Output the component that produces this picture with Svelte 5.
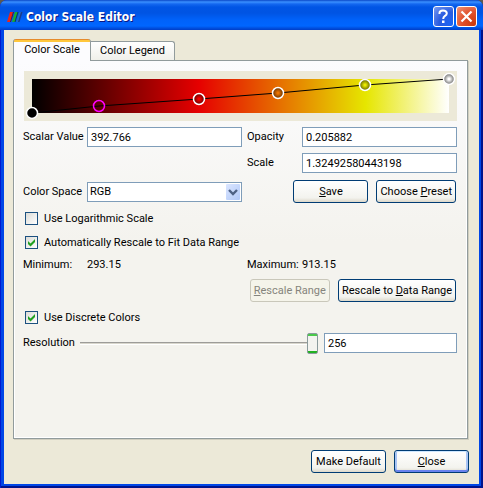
<script>
  let scalarValue = $state('392.766');
  let opacity = $state('0.205882');
  let scale = $state('1.32492580443198');
  let colorSpace = $state('RGB');
  let logScale = $state(false);
  let autoRescale = $state(true);
  let discrete = $state(true);
  let resolution = $state(256);

  const nodes = [
    { x: 8, y: 42, fill: '#000', stroke: '#fff' },
    { x: 75, y: 35, fill: 'none', stroke: '#f0f' },
    { x: 175, y: 28, fill: 'url(#ball-red)', stroke: '#fff' },
    { x: 254, y: 22, fill: 'url(#ball-orange)', stroke: '#fff' },
    { x: 341, y: 14, fill: 'url(#ball-yellow)', stroke: '#fff' },
    { x: 425, y: 8, fill: 'url(#ball-white)', stroke: '#fff' }
  ];
  const balls = [
    ['red', '#f00000', '#700000'],
    ['orange', '#ec7400', '#703600'],
    ['yellow', '#eaea00', '#6c6c00'],
    ['white', '#ffffff', '#787878']
  ];
  const line = nodes.map((n) => `${n.x},${n.y}`).join(' ');
</script>

<div class="window">
  <header>
    <svg class="logo" width="16" height="16" viewBox="0 0 16 16" aria-hidden="true">
      <path d="M3 3h3L3 13H0z" fill="#f02414" />
      <path d="M6 3h1L4 13H3z" fill="#5c1430" />
      <path d="M8 3h2.500L7.500 13H5z" fill="#18b030" />
      <path d="M10.500 3h1L8.500 13h-1z" fill="#0c4040" />
      <path d="M12.500 3H14l-3 10H9.500z" fill="#2c70c0" />
      <path d="M14 3h1.500l-3 10H11z" fill="#1c3c88" />
    </svg>
    <h1>Color Scale Editor</h1>
    <button class="caption help" aria-label="Help">
      <svg width="21" height="21" viewBox="0 0 21 21" aria-hidden="true">
        <path d="M6.500 8V7q0-2.500 3.500-2.500T13.800 7.200q0 1.500-1.800 2.700T10.200 13" fill="none" stroke="#fff" stroke-width="2" />
        <path d="M9 14.500h2.500V17H9z" fill="#fff" />
      </svg>
    </button>
    <button class="caption close" aria-label="Close window">
      <svg width="21" height="21" viewBox="0 0 21 21" aria-hidden="true">
        <path d="M5.500 5.500l10 10M15.500 5.500l-10 10" stroke="#fff" stroke-width="2.200" />
      </svg>
    </button>
  </header>

  <main>
    <div class="tabs" role="tablist">
      <button class="tab active" role="tab" aria-selected="true">Color Scale</button>
      <button class="tab" role="tab" aria-selected="false">Color Legend</button>
    </div>

    <section class="panel" role="tabpanel">
      <div class="plot">
        <svg viewBox="0 0 433 50" aria-label="Color transfer function">
          <defs>
            <linearGradient id="ramp">
              <stop offset="0" stop-color="#000" />
              <stop offset="0.4" stop-color="#e60000" />
              <stop offset="0.8" stop-color="#e6e600" />
              <stop offset="1" stop-color="#fff" />
            </linearGradient>
            {#each balls as [name, light, dark]}
              <radialGradient id="ball-{name}">
                <stop offset="0.15" stop-color={light} />
                <stop offset="0.9" stop-color={dark} />
              </radialGradient>
            {/each}
          </defs>
          <rect x="8" y="8" width="417" height="34" fill="url(#ramp)" />
          <polyline points={line} fill="none" stroke="#000" />
          {#each nodes as n}
            <circle cx={n.x} cy={n.y} r="5.500" fill={n.fill} stroke={n.stroke} stroke-width="1.500" />
          {/each}
        </svg>
      </div>

      <div class="fields">
        <label for="scalar">Scalar Value</label>
        <input id="scalar" type="text" bind:value={scalarValue} />
        <label for="opacity">Opacity</label>
        <input id="opacity" type="text" bind:value={opacity} />
        <label class="third" for="scale">Scale</label>
        <input id="scale" type="text" bind:value={scale} />
      </div>

      <div class="fields space">
        <label for="space">Color Space</label>
        <div class="combo">
          <select id="space" bind:value={colorSpace}>
            <option>RGB</option>
            <option>HSV</option>
            <option>CIELAB</option>
            <option>Diverging</option>
          </select>
          <span class="arrow">
            <svg width="14" height="16" viewBox="0 0 14 16" aria-hidden="true">
              <path d="M3 6l4 4 4-4" fill="none" stroke="#4d6185" stroke-width="2.400" />
            </svg>
          </span>
        </div>
        <div class="actions wide">
          <button class="push"><u>S</u>ave</button>
          <button class="push">Choose <u>P</u>reset</button>
        </div>
      </div>

      <label class="check"><input type="checkbox" bind:checked={logScale} />Use Logarithmic Scale</label>
      <label class="check auto"><input type="checkbox" bind:checked={autoRescale} />Automatically Rescale to Fit Data Range</label>

      <div class="fields range">
        <span>Minimum:</span><span>293.15</span>
        <span>Maximum:</span><span>913.15</span>
      </div>
      <div class="actions">
        <button class="push" disabled><u>R</u>escale Range</button>
        <button class="push">Rescale to <u>D</u>ata Range</button>
      </div>

      <label class="check"><input type="checkbox" bind:checked={discrete} />Use Discrete Colors</label>

      <div class="resolution">
        <label for="res">Resolution</label>
        <input id="res" type="range" min="2" max="256" bind:value={resolution} />
        <input type="text" aria-label="Resolution value" bind:value={resolution} />
      </div>
    </section>

    <footer class="actions">
      <button class="push">Make Default</button>
      <button class="push default"><u>C</u>lose</button>
    </footer>
  </main>
</div>

<style>
  :global(body) {
    background: #5c5a50;
  }
  .window,
  .window * {
    box-sizing: border-box;
  }
  .window {
    display: flex;
    flex-direction: column;
    min-height: 100vh;
    padding: 0 4px 4px;
    border-radius: 7px 7px 0 0;
    background: #0046e6;
    box-shadow: inset 1px 0 #0019cf, inset -2px -2px #00138c;
    font: 11px/14px Roboto, 'Liberation Sans', sans-serif;
    color: #000;
  }
  button,
  input,
  select {
    font: inherit;
    color: inherit;
    margin: 0;
    padding: 0;
  }
  header {
    display: flex;
    align-items: center;
    gap: 2px;
    height: 30px;
    margin: 0 -4px;
    padding: 3px 6px 0 7px;
    border-radius: 7px 7px 0 0;
    background: linear-gradient(#0a48c8 0, #3a90ff 2px, #1468f0 4px, #0055e5 7px, #0054e3 13px, #0062fa 20px, #0066ff 26px, #0050e0 28px, #003dc8 30px);
  }
  h1 {
    flex: 1;
    margin: 0;
    padding-left: 1px;
    font: bold 12px/18px 'DejaVu Sans Condensed', 'DejaVu Sans', sans-serif;
    color: #fff;
    text-shadow: 1px 1px #0a1883;
  }
  .caption {
    width: 21px;
    height: 21px;
    border: 1px solid #fff;
    border-radius: 3px;
    background: radial-gradient(circle at 90% 90%, #1c64f4, #2a5ce0 50%, #7b9cf0);
  }
  .caption svg {
    display: block;
    margin: -1px;
  }
  .close {
    background: radial-gradient(circle at 90% 90%, #cc3a0c, #e0502c 50%, #f09478);
  }
  main {
    flex: 1;
    display: flex;
    flex-direction: column;
    padding: 9px 11px 11px 9px;
    background: #ece9d8;
  }
  .tabs {
    display: flex;
    align-items: flex-end;
  }
  .tab {
    height: 19px;
    width: 84px;
    border: 1px solid #919b9c;
    border-width: 1px 1px 0 0;
    border-radius: 0 3px 0 0;
    background: linear-gradient(#fff, #f0f0ea);
  }
  .tab.active {
    position: relative;
    z-index: 1;
    width: 78px;
    height: 22px;
    margin-bottom: -1px;
    border-width: 0 1px;
    border-radius: 3px 3px 0 0;
    background: linear-gradient(#e68b2c 0 1px, #ffc73c 1px 3px, #fcfcfe 3px);
  }
  .panel {
    flex: 1;
    padding: 10px 10px 10px 9px;
    border: 1px solid #919b9c;
    background: linear-gradient(#fcfcfe, #f4f3ee 180px);
    box-shadow: 1px 1px #d0cebf, inset -1px -1px #fff, inset 1px 0 #fff;
  }
  .plot {
    margin-left: 1px;
    background: #ece9d8;
  }
  .plot svg {
    display: block;
    width: 100%;
  }
  .fields {
    display: grid;
    grid-template-columns: 59px 1fr 50px 1fr;
    gap: 6px 5px;
    align-items: center;
    margin-top: 6px;
    white-space: nowrap;
  }
  .third {
    grid-column: 3;
  }
  .space {
    margin-top: 7px;
  }
  .wide {
    grid-column: 3 / 5;
  }
  input[type='text'] {
    width: 100%;
    height: 20px;
    padding: 0 3px;
    border: 1px solid #7f9db9;
    background: #fff;
  }
  .combo {
    position: relative;
  }
  select {
    display: block;
    appearance: none;
    width: 100%;
    height: 20px;
    padding: 0 2px;
    border: 1px solid #7f9db9;
    border-radius: 0;
    background: #fff;
  }
  .arrow {
    position: absolute;
    top: 2px;
    right: 2px;
    border-radius: 1px;
    background: linear-gradient(135deg, #dbe6ff, #b0c8f8);
    pointer-events: none;
  }
  .arrow svg {
    display: block;
  }
  .actions {
    display: flex;
    justify-content: flex-end;
    gap: 8px;
    padding-right: 1px;
  }
  .push {
    min-width: 75px;
    height: 23px;
    padding: 0 3px;
    border: 1px solid #003c74;
    border-radius: 3px;
    background: linear-gradient(#fff, #f3f3ee 80%, #dcd8ca);
    white-space: nowrap;
  }
  .push:disabled {
    border-color: #c9c7ba;
    background: #f5f4ea;
    color: #85847c;
  }
  .push.default {
    box-shadow: inset 0 -2px #6982ee, inset 0 1px #cee7ff, inset 2px 0 #a8c4f4, inset -2px 0 #a8c4f4;
  }
  .check {
    display: flex;
    align-items: center;
    gap: 6px;
    height: 13px;
    margin: 9px 0 0 2px;
  }
  .auto {
    margin-top: 11px;
  }
  input[type='checkbox'] {
    appearance: none;
    width: 13px;
    height: 13px;
    border: 1px solid #1c5180;
    background: linear-gradient(135deg, #dcdcd7, #fff);
  }
  input[type='checkbox']:checked::before {
    content: '';
    display: block;
    width: 11px;
    height: 11px;
    background: #21a121;
    clip-path: polygon(18% 36%, 41% 59%, 82% 18%, 82% 46%, 41% 86%, 18% 64%);
  }
  .range {
    margin: 9px 0 7px;
  }
  .resolution {
    display: grid;
    grid-template-columns: 51px 1fr 133px;
    column-gap: 6px;
    align-items: center;
    margin-top: 9px;
  }
  input[type='range'] {
    appearance: none;
    width: 100%;
    height: 20px;
    background: linear-gradient(#9d9c99 0 1px, #d8d6cc 1px 2px, #fff 2px) 0 9px / 100% 3px no-repeat;
  }
  input[type='range']::-webkit-slider-thumb {
    appearance: none;
    width: 11px;
    height: 21px;
    border: 1px solid #8a9a9c;
    border-radius: 2px;
    background: linear-gradient(#4ac84a 0 2px, #f3f3ef 2px 17px, #21b121 17px);
  }
  footer {
    margin-top: 11px;
  }
  footer.actions {
    margin-right: -1px;
    padding: 0;
  }
</style>
